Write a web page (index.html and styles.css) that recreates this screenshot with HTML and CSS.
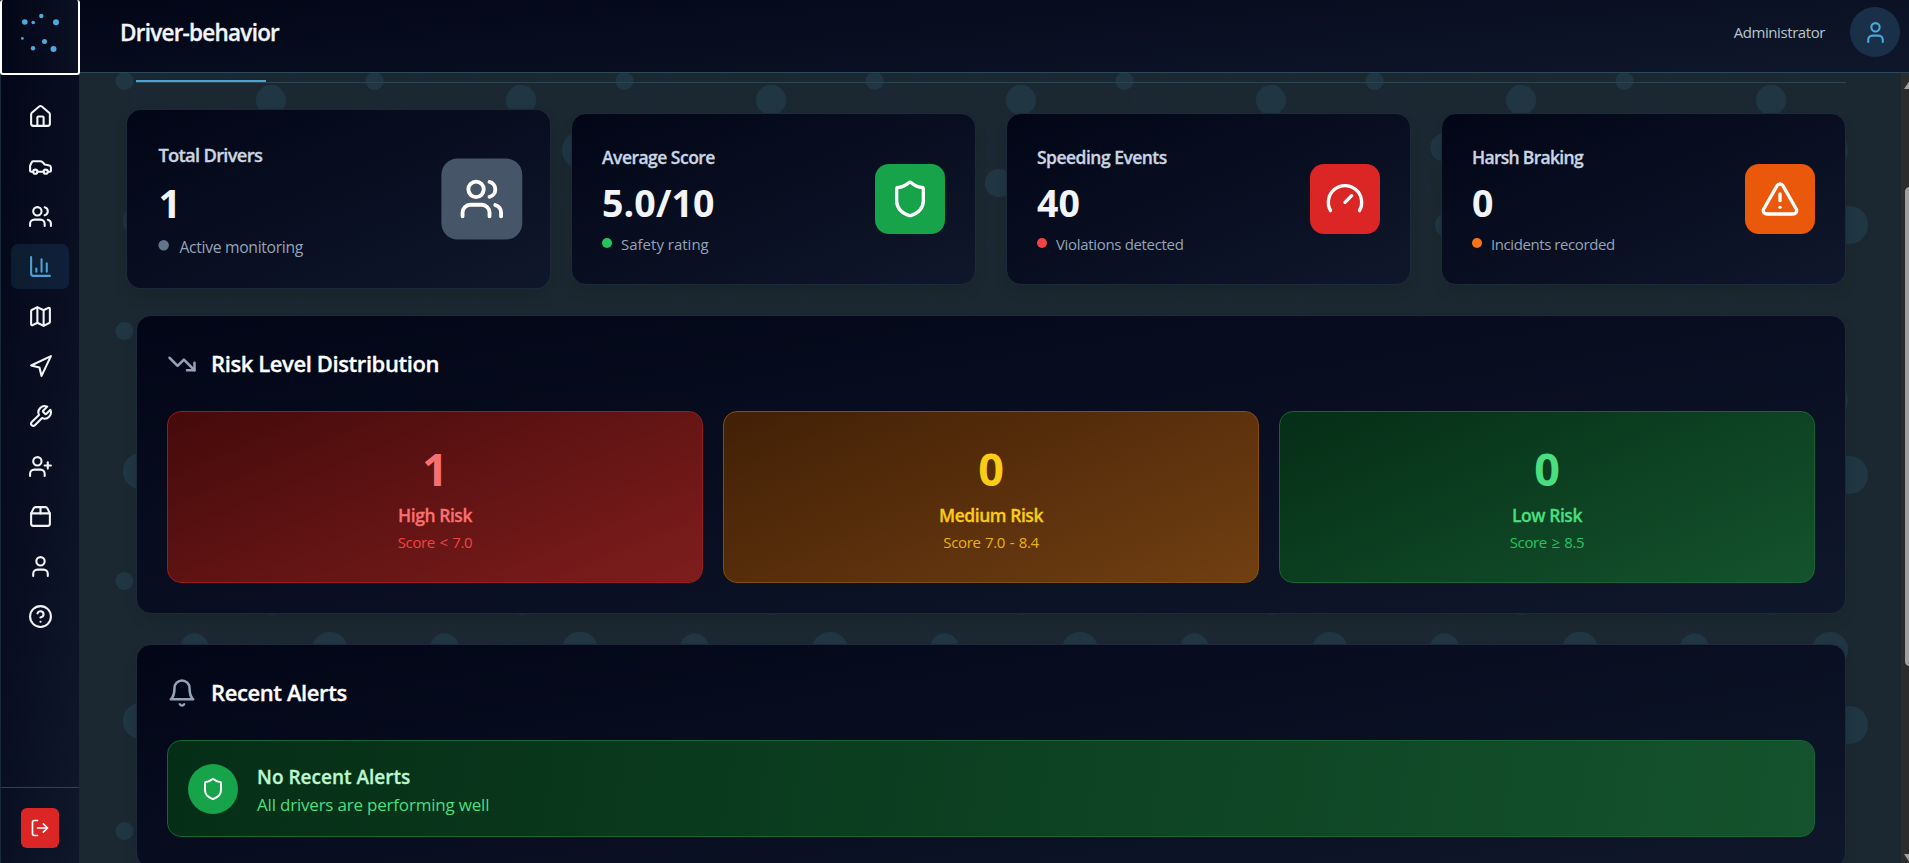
FILE: index.html
```html
<!DOCTYPE html>
<html lang="en">
<head>
<meta charset="utf-8">
<title>Driver-behavior</title>
<link rel="stylesheet" href="styles.css">
</head>
<body>
<div class="app">
  <aside class="sidebar">
    <div class="logo">
      <svg width="76" height="72" viewBox="2 0 76 72">
        <path class="logo-net" d="M24.7 22L41.3 16L44.5 41.3L33 22.5L22.3 38.3L56 22.3L53.5 49L33 48.3L24.7 22M41.3 16L22.3 38.3L33 48.3"/>
        <g class="logo-dots"><circle cx="24.8" cy="22" r="2.8"/><circle cx="33.2" cy="22.5" r="1.8"/><circle cx="41.3" cy="16" r="2.2"/><circle cx="56" cy="22.3" r="3"/><circle cx="22.4" cy="38.4" r="1.4"/><circle cx="44.5" cy="41.4" r="2.5"/><circle cx="33" cy="48.3" r="2.2"/><circle cx="53.5" cy="49" r="3"/></g>
      </svg>
    </div>
    <nav class="nav">
      <a class="nav-item"><svg class="icon" viewBox="0 0 24 24"><path d="M15 21v-8a1 1 0 0 0-1-1h-4a1 1 0 0 0-1 1v8"/><path d="M3 10a2 2 0 0 1 .709-1.528l7-5.999a2 2 0 0 1 2.582 0l7 5.999A2 2 0 0 1 21 10v9a2 2 0 0 1-2 2H5a2 2 0 0 1-2-2z"/></svg></a>
      <a class="nav-item"><svg class="icon" viewBox="0 0 24 24"><path d="M19 17h2c.6 0 1-.4 1-1v-3c0-.9-.7-1.7-1.5-1.9C18.7 10.6 16 10 16 10s-1.300-1.400-2.200-2.300c-.5-.4-1.100-.7-1.800-.7H5c-.6 0-1.100.4-1.400.9l-1.400 2.900A3.700 3.700 0 0 0 2 12v4c0 .6.4 1 1 1h2"/><circle cx="7" cy="17" r="2"/><path d="M9 17h6"/><circle cx="17" cy="17" r="2"/></svg></a>
      <a class="nav-item"><svg class="icon" viewBox="0 0 24 24"><path d="M16 21v-2a4 4 0 0 0-4-4H6a4 4 0 0 0-4 4v2"/><circle cx="9" cy="7" r="4"/><path d="M22 21v-2a4 4 0 0 0-3-3.870"/><path d="M16 3.130a4 4 0 0 1 0 7.750"/></svg></a>
      <a class="nav-item active"><svg class="icon" viewBox="0 0 24 24"><path d="M3 3v16a2 2 0 0 0 2 2h16"/><path d="M18 17V9"/><path d="M13 17V5"/><path d="M8 17v-3"/></svg></a>
      <a class="nav-item"><svg class="icon" viewBox="0 0 24 24"><path d="M14.106 5.553a2 2 0 0 0 1.788 0l3.659-1.830A1 1 0 0 1 21 4.619v12.764a1 1 0 0 1-.553.894l-4.553 2.277a2 2 0 0 1-1.788 0l-4.212-2.106a2 2 0 0 0-1.788 0l-3.659 1.830A1 1 0 0 1 3 19.381V6.618a1 1 0 0 1 .553-.894l4.553-2.277a2 2 0 0 1 1.788 0z"/><path d="M15 5.764v15"/><path d="M9 3.236v15"/></svg></a>
      <a class="nav-item"><svg class="icon" viewBox="0 0 24 24"><polygon points="3 11 22 2 13 21 11 13 3 11"/></svg></a>
      <a class="nav-item"><svg class="icon" viewBox="0 0 24 24"><path d="M14.700 6.300a1 1 0 0 0 0 1.400l1.600 1.600a1 1 0 0 0 1.400 0l3.770-3.770a6 6 0 0 1-7.940 7.940l-6.910 6.910a2.120 2.120 0 0 1-3-3l6.910-6.910a6 6 0 0 1 7.940-7.940l-3.760 3.760z"/></svg></a>
      <a class="nav-item"><svg class="icon" viewBox="0 0 24 24"><path d="M16 21v-2a4 4 0 0 0-4-4H6a4 4 0 0 0-4 4v2"/><circle cx="9" cy="7" r="4"/><path d="M19 8v6"/><path d="M22 11h-6"/></svg></a>
      <a class="nav-item"><svg class="icon" viewBox="0 0 24 24"><path d="M3 9h18v10a2 2 0 0 1-2 2H5a2 2 0 0 1-2-2V9Z"/><path d="m3 9 2.450-4.900A2 2 0 0 1 7.240 3h9.520a2 2 0 0 1 1.800 1.100L21 9"/><path d="M12 3v6"/></svg></a>
      <a class="nav-item"><svg class="icon" viewBox="0 0 24 24"><path d="M19 21v-2a4 4 0 0 0-4-4H9a4 4 0 0 0-4 4v2"/><circle cx="12" cy="7" r="4"/></svg></a>
      <a class="nav-item"><svg class="icon" viewBox="0 0 24 24"><circle cx="12" cy="12" r="10"/><path d="M9.090 9a3 3 0 0 1 5.830 1c0 2-3 3-3 3"/><path d="M12 17h.01"/></svg></a>
    </nav>
    <div class="side-foot">
      <button class="logout"><svg class="icon" viewBox="0 0 24 24"><path d="M9 21H5a2 2 0 0 1-2-2V5a2 2 0 0 1 2-2h4"/><path d="m16 17 5-5-5-5"/><path d="M21 12H9"/></svg></button>
    </div>
  </aside>
  <div class="main">
    <header class="topbar">
      <h1 class="page-title">Driver-behavior</h1>
      <div class="user">
        <span class="user-name">Administrator</span>
        <span class="avatar"><svg class="icon" viewBox="0 0 24 24"><path d="M19 21v-2a4 4 0 0 0-4-4H9a4 4 0 0 0-4 4v2"/><circle cx="12" cy="7" r="4"/></svg></span>
      </div>
    </header>
    <div class="viewport">
      <svg class="backdrop" width="1821" height="790" viewBox="80 73 1821 790">
        <defs>
          <pattern id="net" patternUnits="userSpaceOnUse" x="110" y="54" width="250" height="250">
            <g transform="translate(-110 -54)">
              <path class="net-line" d="M141 221L251 182L271 100L196 225L124.500 81L349 224L330 150L194 148L141 221M251 182L124.500 81L194 148M271 100L330 150M124.500 81L271 290M251 182L300 60M194 148L160 60M349 224L300 300M141 221L180 304M196 225L230 304M251 182L220 54"/>
              <g class="net-dots"><circle cx="124.500" cy="81" r="9"/><circle cx="141" cy="221" r="18"/><circle cx="197" cy="225" r="12"/><circle cx="249" cy="183" r="14"/><circle cx="271" cy="100" r="15"/><circle cx="194.500" cy="147.500" r="14"/><circle cx="330" cy="150" r="18"/></g>
            </g>
          </pattern>
          <pattern id="net-edge" patternUnits="userSpaceOnUse" x="70" y="54" width="250" height="250">
            <circle class="net-dots" cx="29" cy="171" r="19"/>
          </pattern>
        </defs>
        <rect x="110" y="73" width="1750" height="790" fill="url(#net)"/>
        <rect x="320" y="73" width="1560" height="790" fill="url(#net-edge)"/>
      </svg>
      <main class="content">
        <div class="tabs"><span class="tab-active"></span></div>
        <section class="stats">
          <article class="card stat hovered">
            <div class="stat-text"><div class="label l1">Total Drivers</div><div class="value">1</div><div class="note n1"><i class="dot slate"></i>Active monitoring</div></div>
            <div class="tile slate-tile"><svg class="icon" viewBox="0 0 24 24"><path d="M16 21v-2a4 4 0 0 0-4-4H6a4 4 0 0 0-4 4v2"/><circle cx="9" cy="7" r="4"/><path d="M22 21v-2a4 4 0 0 0-3-3.870"/><path d="M16 3.130a4 4 0 0 1 0 7.750"/></svg></div>
          </article>
          <article class="card stat">
            <div class="stat-text"><div class="label l2">Average Score</div><div class="value">5.0/10</div><div class="note n2"><i class="dot green"></i>Safety rating</div></div>
            <div class="tile green-tile"><svg class="icon" viewBox="0 0 24 24"><path d="M20 13c0 5-3.500 7.500-7.660 8.950a1 1 0 0 1-.67-.01C7.500 20.500 4 18 4 13V6a1 1 0 0 1 1-1c2 0 4.500-1.200 6.240-2.720a1.170 1.170 0 0 1 1.520 0C14.510 3.810 17 5 19 5a1 1 0 0 1 1 1z"/></svg></div>
          </article>
          <article class="card stat">
            <div class="stat-text"><div class="label l3">Speeding Events</div><div class="value">40</div><div class="note n3"><i class="dot red"></i>Violations detected</div></div>
            <div class="tile red-tile"><svg class="icon" viewBox="0 0 24 24"><path d="m12 14 4-4"/><path d="M3.340 19a10 10 0 1 1 17.320 0"/></svg></div>
          </article>
          <article class="card stat">
            <div class="stat-text"><div class="label l4">Harsh Braking</div><div class="value">0</div><div class="note n4"><i class="dot orange"></i>Incidents recorded</div></div>
            <div class="tile orange-tile"><svg class="icon" viewBox="0 0 24 24"><path d="m21.730 18-8-14a2 2 0 0 0-3.480 0l-8 14A2 2 0 0 0 4 21h16a2 2 0 0 0 1.730-3"/><path d="M12 9v4"/><path d="M12 17h.01"/></svg></div>
          </article>
        </section>
        <section class="card panel">
          <h2 class="panel-head"><svg class="icon" viewBox="0 0 24 24"><path d="M22 17L13.500 8.500L8.500 13.500L2 7"/><path d="M16 17h6v-6"/></svg><span>Risk Level Distribution</span></h2>
          <div class="risks">
            <div class="risk high"><div class="num">1</div><div class="name">High Risk</div><div class="range">Score &lt; 7.0</div></div>
            <div class="risk medium"><div class="num">0</div><div class="name">Medium Risk</div><div class="range">Score 7.0 - 8.4</div></div>
            <div class="risk low"><div class="num">0</div><div class="name">Low Risk</div><div class="range">Score ≥ 8.5</div></div>
          </div>
        </section>
        <section class="card panel">
          <h2 class="panel-head"><svg class="icon" viewBox="0 0 24 24"><path d="M6 8a6 6 0 0 1 12 0c0 7 3 9 3 9H3s3-2 3-9"/><path d="M10.300 21a1.940 1.940 0 0 0 3.400 0"/></svg><span>Recent Alerts</span></h2>
          <div class="alert">
            <span class="alert-icon"><svg class="icon" viewBox="0 0 24 24"><path d="M20 13c0 5-3.500 7.500-7.660 8.950a1 1 0 0 1-.67-.01C7.500 20.500 4 18 4 13V6a1 1 0 0 1 1-1c2 0 4.500-1.200 6.240-2.720a1.170 1.170 0 0 1 1.520 0C14.510 3.810 17 5 19 5a1 1 0 0 1 1 1z"/></svg></span>
            <div class="alert-body"><div class="alert-title">No Recent Alerts</div><div class="alert-text">All drivers are performing well</div></div>
          </div>
        </section>
      </main>
      <div class="scrollbar"><i class="arrow up"></i><i class="thumb"></i><i class="arrow down"></i></div>
    </div>
  </div>
</div>
</body>
</html>
```
FILE: styles.css
```css
* { box-sizing: border-box; margin: 0; padding: 0; }
body { width: 1909px; height: 863px; overflow: hidden; background: #1c2831; font-family: "Open Sans", "Noto Sans", sans-serif; color: #f1f5f9; }
.app { display: flex; height: 863px; }
.icon { display: block; fill: none; stroke: currentColor; stroke-width: 2; stroke-linecap: round; stroke-linejoin: round; }

.sidebar { width: 80px; height: 863px; flex: none; display: flex; flex-direction: column; background: linear-gradient(97deg, #020617, #0f172a); border-left: 1px solid #1b2a3b; border-right: 1px solid #1a2637; }
.logo { width: 80px; height: 75px; flex: none; margin-left: -1px; border: 2px solid #fff; border-top-width: 0; border-radius: 3px; background: linear-gradient(90deg, #020617, #0b1122); overflow: hidden; position: relative; }
.logo svg { display: block; }
.logo-net { fill: none; stroke: #080d33; stroke-width: .8; }
.logo-dots { fill: #4fa8dc; }
.nav { flex: 1; padding: 19px 0 0 10px; display: flex; flex-direction: column; gap: 5px; }
.nav-item { width: 58px; height: 45px; flex: none; display: flex; align-items: center; justify-content: center; border-radius: 7px; color: #f1f5f9; }
.nav-item .icon { width: 25px; height: 25px; }
.nav-item.active { background: linear-gradient(90deg, #0d1c2e, #10203a); color: #4aa3d4; }
.side-foot { height: 76px; border-top: 1px solid #2b4453; padding: 20px 0 0 20px; }
.logout { width: 38px; height: 40px; border: 0; border-radius: 6px; background: #dc2626; color: #fff; display: flex; align-items: center; justify-content: center; }
.logout .icon { width: 20px; height: 20px; }

.main { flex: 1; display: flex; flex-direction: column; }
.topbar { height: 73px; flex: none; display: flex; align-items: center; justify-content: space-between; padding: 0 9px 8px 40px; background: linear-gradient(175deg, #020617, #0f172a); border-bottom: 1px solid #2b4a57; }
.page-title { font-size: 22.500px; font-weight: 600; line-height: 30px; letter-spacing: -.76px; padding-top: 2px; }
.page-title, .label, .panel-head span, .name, .alert-title { -webkit-text-stroke: .3px currentColor; }
.user { display: flex; align-items: center; gap: 25px; }
.user-name { font-size: 15px; color: #b4c6d0; letter-spacing: -.42px; }
.avatar { width: 50px; height: 50px; border-radius: 50%; background: #1a3049; color: #4aa8dc; display: flex; align-items: center; justify-content: center; }
.avatar .icon { width: 25px; height: 25px; }

.viewport { flex: 1; display: flex; position: relative; overflow: hidden; }
.backdrop { position: absolute; left: 0; top: 0; }
.net-line { fill: none; stroke: #1a2738; stroke-width: 2; opacity: .55; }
.net-dots { fill: #203643; }
.content { position: relative; width: 1821px; padding: 0 55px 0 56px; }
.tabs { height: 10px; border-bottom: 1px solid #2b4650; display: flex; align-items: flex-end; }
.tab-active { width: 130px; height: 2px; background: #4aa3d4; }
.card { border: 1px solid #1e293b; background: linear-gradient(170deg, #020617, #0f172a); border-radius: 15px; box-shadow: 0 8px 14px -4px rgba(10, 25, 25, .3); }
.stats { display: grid; grid-template-columns: repeat(4, 405px); gap: 30px; margin-top: 30px; }
.stat { height: 172px; padding: 0 30px; display: flex; align-items: center; justify-content: space-between; background: linear-gradient(157deg, #020617, #0f172a); }
.hovered { transform: scale(1.05); }
.stat-text { padding-top: 1px; }
.label { font-size: 17.500px; font-weight: 600; line-height: 26px; color: #cbd5e1; letter-spacing: -.52px; }
.l1, .l4 { letter-spacing: -.7px; }
.value { font-size: 37.500px; font-weight: 700; line-height: 44px; margin-top: 11px; letter-spacing: .1px; }
.note { font-size: 15px; line-height: 24px; margin-top: 7px; color: #94a3b8; display: flex; align-items: center; gap: 9px; }
.n1 { letter-spacing: -.32px; gap: 10px; }
.n3 { letter-spacing: -.33px; }
.n4 { letter-spacing: -.42px; }
.dot { width: 10px; height: 10px; margin-top: -2px; border-radius: 50%; }
.slate { background: #64748b; }
.green { background: #22c55e; }
.red { background: #ef4444; }
.orange { background: #f97316; }
.tile { width: 70px; height: 70px; border-radius: 14px; display: flex; align-items: center; justify-content: center; color: #fff; }
.tile .icon { width: 40px; height: 40px; }
.slate-tile { background: #475569; transform: scale(1.1); }
.green-tile { background: #16a34a; }
.red-tile { background: #dc2626; }
.orange-tile { background: #ea580c; }

.panel { margin-top: 30px; padding: 30px; }
.panel-head { display: flex; align-items: center; gap: 14px; height: 36px; font-size: 22px; font-weight: 600; line-height: 36px; color: #fff; letter-spacing: -.4px; }
.panel-head .icon { width: 30px; height: 30px; color: #94a3b8; }
.panel-head span { margin-top: -3px; }
.risks { display: grid; grid-template-columns: repeat(3, 536px); gap: 20px; margin-top: 29px; }
.risk { height: 172px; border: 1px solid; border-radius: 14px; text-align: center; padding-top: 27px; }
.num { font-size: 45px; font-weight: 700; line-height: 60px; }
.name { font-size: 17.500px; font-weight: 600; line-height: 28px; margin-top: 2px; letter-spacing: -.45px; }
.range { font-size: 15px; line-height: 24px; margin-top: 1px; letter-spacing: -.35px; word-spacing: 1px; }
.high { background: linear-gradient(157deg, #450a0a, #7f1d1d); border-color: #991b1b; color: #f87171; }
.high .range { color: #ef4444; }
.medium { background: linear-gradient(157deg, #422006, #713f12); border-color: #854d0e; color: #facc15; }
.medium .range { color: #eab308; }
.low { background: linear-gradient(157deg, #052e16, #14532d); border-color: #166534; color: #4ade80; }
.low .range { color: #22c55e; }
.alert { height: 97px; margin-top: 29px; border: 1px solid #166534; border-radius: 14px; background: linear-gradient(100deg, #052e16, #14532d); display: flex; align-items: center; gap: 19px; padding-left: 20px; }
.alert-icon { width: 50px; height: 50px; border-radius: 50%; background: #16a34a; color: #fff; display: flex; align-items: center; justify-content: center; }
.alert-icon .icon { width: 24px; height: 24px; }
.alert-body { padding-top: 4px; }
.alert-title { font-size: 19px; font-weight: 600; line-height: 28px; color: #bbf7d0; }
.alert-text { font-size: 17px; line-height: 27px; color: #4ade80; letter-spacing: -.2px; }

.scrollbar { width: 8px; background: #2c2c2c; position: relative; overflow: hidden; }
.thumb { position: absolute; left: 4px; top: 114px; width: 9px; height: 479px; border-radius: 5px; background: #9f9f9f; }
.arrow { position: absolute; left: 3px; border: 6px solid transparent; }
.up { top: 7px; border-top: 0; border-bottom: 9px solid #9f9f9f; }
.down { bottom: 0; border-bottom: 0; border-top: 9px solid #9f9f9f; }
```
